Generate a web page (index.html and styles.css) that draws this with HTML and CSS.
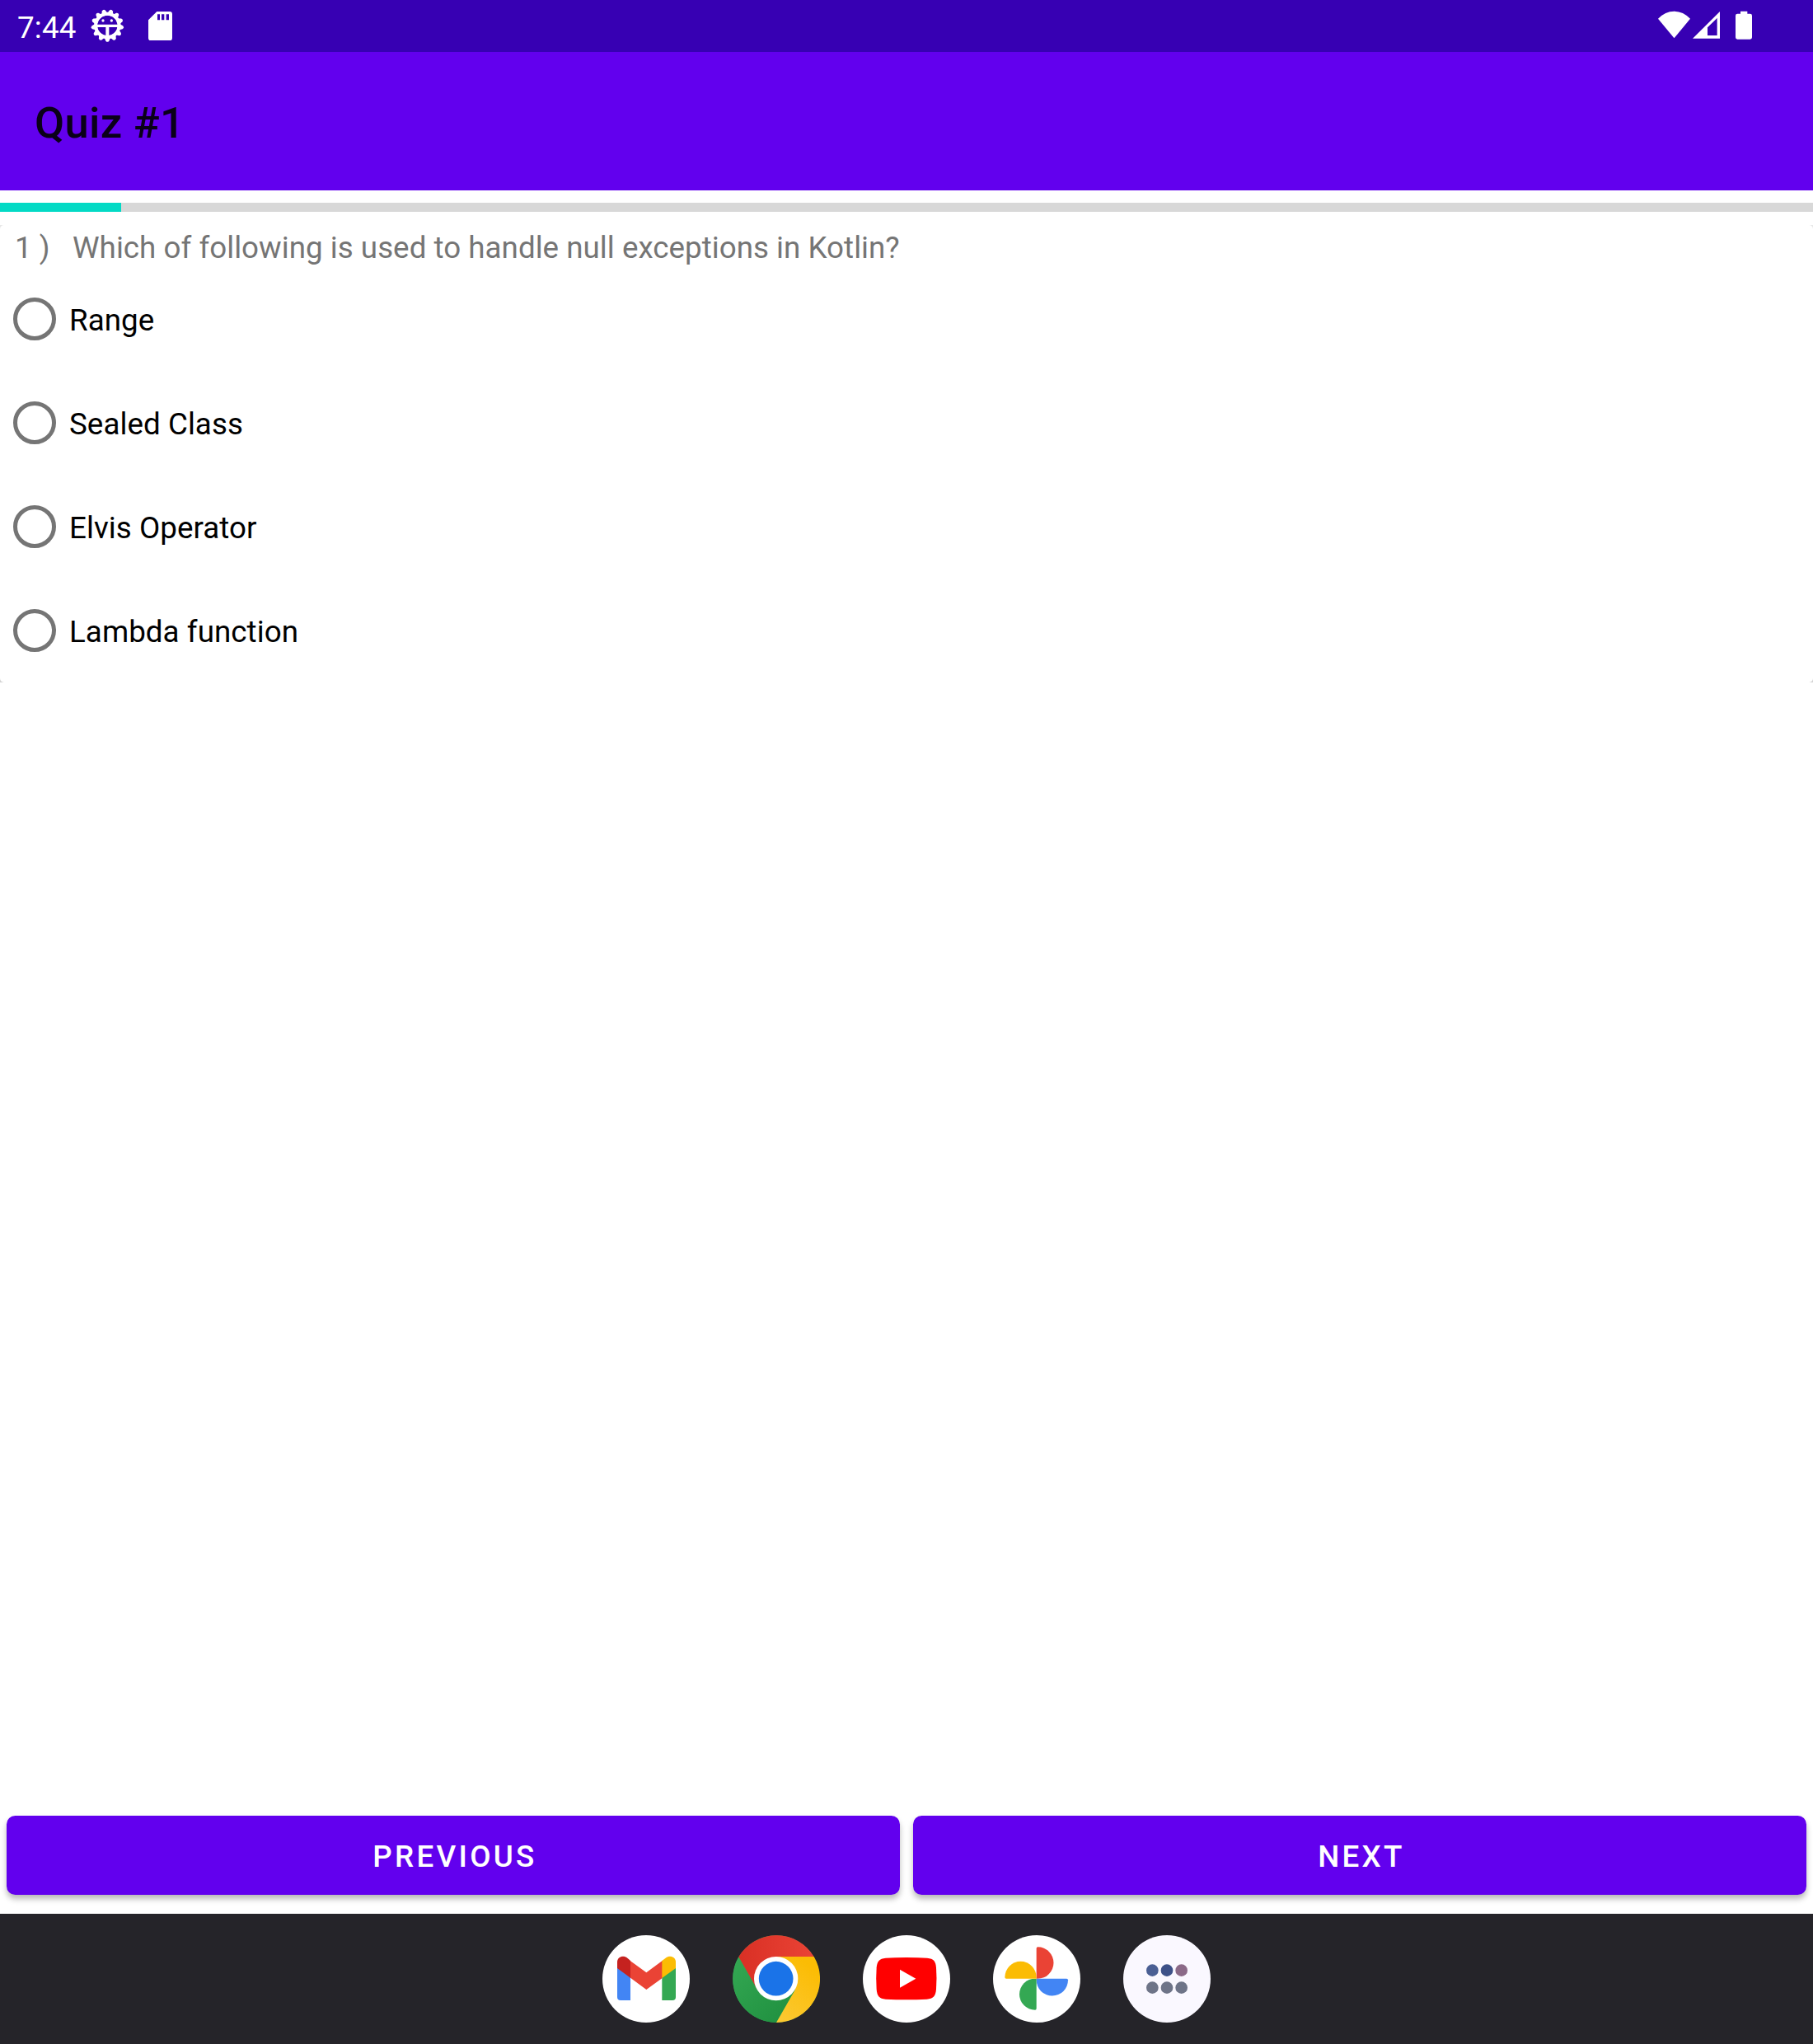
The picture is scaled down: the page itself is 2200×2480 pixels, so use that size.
FILE: index.html
```html
<!DOCTYPE html>
<html lang="en">
<head>
<meta charset="utf-8">
<title>Quiz #1</title>
<link rel="stylesheet" href="styles.css">
</head>
<body>
<div class="screen">
  <header class="status-bar">
    <span class="clock">7:44</span>
    <svg class="status-gear" viewBox="330 33 123 123" width="41" height="41" fill="#fff">
      <defs><path id="tooth" d="M377 56L385 37Q391 30 397 37L405 56Z"/></defs>
      <g>
        <use href="#tooth" transform="rotate(13.85 391 93)"/>
        <use href="#tooth" transform="rotate(41.54 391 93)"/>
        <use href="#tooth" transform="rotate(69.23 391 93)"/>
        <use href="#tooth" transform="rotate(96.92 391 93)"/>
        <use href="#tooth" transform="rotate(124.62 391 93)"/>
        <use href="#tooth" transform="rotate(152.31 391 93)"/>
        <use href="#tooth" transform="rotate(180 391 93)"/>
        <use href="#tooth" transform="rotate(207.69 391 93)"/>
        <use href="#tooth" transform="rotate(235.38 391 93)"/>
        <use href="#tooth" transform="rotate(263.08 391 93)"/>
        <use href="#tooth" transform="rotate(290.77 391 93)"/>
        <use href="#tooth" transform="rotate(318.46 391 93)"/>
        <use href="#tooth" transform="rotate(346.15 391 93)"/>
      </g>
      <circle cx="391" cy="93" r="42.5" fill="none" stroke="#fff" stroke-width="12"/>
      <path d="M352 89H430V99H397V132H385V99H352Z"/>
      <circle cx="375" cy="75" r="5"/><circle cx="406" cy="75" r="5"/>
    </svg>
    <svg class="status-card" viewBox="540 41 87 106" width="29" height="35.3">
      <path fill="#fff" fill-rule="evenodd" d="M571 41H618Q627 41 627 50V138Q627 147 618 147H549Q540 147 540 138V72ZM573 51V72H582V51ZM588 51V72H598V51ZM605 51V72H615V51Z"/>
    </svg>
    <svg class="status-system" viewBox="96 40 342 105" width="114" height="35" fill="#fff">
      <path d="M96 69Q122 42 154.500 42T213 69L154.500 140Z"/>
      <path fill-rule="evenodd" d="M321 43V141H222ZM311 67L276 101V130H311Z"/>
      <path d="M396 42H421V51H431Q438 51 438 58V137Q438 144 431 144H385Q378 144 378 137V58Q378 51 385 51H396Z"/>
    </svg>
  </header>

  <div class="app-bar"><h1 class="app-title">Quiz #1</h1></div>

  <main class="quiz">
    <div class="progress"><div class="progress-value"></div></div>
    <div class="card-edge">
      <section class="card">
        <div class="question"><span class="question-number">1 )</span><span>Which of following is used to handle null exceptions in Kotlin?</span></div>
        <div class="options">
          <div class="option"><span class="radio"></span><span class="option-label">Range</span></div>
          <div class="option"><span class="radio"></span><span class="option-label">Sealed Class</span></div>
          <div class="option"><span class="radio"></span><span class="option-label">Elvis Operator</span></div>
          <div class="option"><span class="radio"></span><span class="option-label">Lambda function</span></div>
        </div>
      </section>
    </div>
    <div class="actions">
      <button class="button">PREVIOUS</button>
      <button class="button">NEXT</button>
    </div>
  </main>

  <nav class="taskbar">
    <svg class="app" viewBox="33 54 318 318">
      <circle cx="192" cy="213" r="159" fill="#fff"/>
      <path fill="#4285f4" d="M87 170L135 205V291H99Q87 291 87 279Z"/>
      <path fill="#34a853" d="M300 170L250 207V291H288Q300 291 300 279Z"/>
      <path fill="#ea4335" d="M133 146L193 190L252 146V209L193 252L133 208Z"/>
      <path fill="#c5221f" d="M87 174V152C87 134 108 125 124 137L135 147V209Z"/>
      <path fill="#fbbc04" d="M300 174V152C300 134 279 125 263 137L250 147V210Z"/>
    </svg>
    <svg class="app" viewBox="507 54 318 318">
      <defs>
        <linearGradient id="red" x1="0" x2="1"><stop stop-color="#d93025"/><stop offset="1" stop-color="#ea4335"/></linearGradient>
        <linearGradient id="green" x1="1" y1="1" x2="0" y2="0"><stop stop-color="#1e8e3e"/><stop offset="1" stop-color="#34a853"/></linearGradient>
        <linearGradient id="yellow" x1="0" y1="1" x2=".5" y2="0"><stop stop-color="#fcc934"/><stop offset="1" stop-color="#fbbc04"/></linearGradient>
      </defs>
      <circle cx="666" cy="213" r="158" fill="#34a853"/>
      <path fill="url(#green)" d="M529 133A159 159 0 0 0 666 372L735 252L666 213L597 252Z"/>
      <path fill="url(#yellow)" d="M666 372A159 159 0 0 0 803 132H666V213L735 252Z"/>
      <path fill="url(#red)" d="M529 133A159 159 0 0 1 803 132H666V213L597 252Z"/>
      <circle cx="665" cy="212" r="80" fill="#fff"/>
      <circle cx="665" cy="212" r="62.500" fill="#1a73e8"/>
    </svg>
    <svg class="app" viewBox="21 54 318 318">
      <circle cx="180" cy="213" r="159" fill="#fff"/>
      <path fill="#f00" d="M179 135Q225 135 255 137C280 139 286 150 288 172Q291 212 288 251C286 275 277 285 254 287Q179 291 104 287C81 285 73 275 71 251Q68 212 71 172C73 149 81 139 104 137Q134 135 179 135Z"/>
      <path fill="#fff" d="M156 179L214 212L156 245Z"/>
    </svg>
    <svg class="app" viewBox="495 54 318 318">
      <circle cx="654" cy="213" r="159" fill="#fff"/>
      <path fill="#ea4335" d="M653 212V102Q653 97 658 97A57.500 57.500 0 0 1 658 212Z"/>
      <path fill="#4285f4" d="M653 212H763Q768 212 768 217A57.500 57.500 0 0 1 653 217Z"/>
      <path fill="#34a853" d="M653 212V321Q653 326 648 326A57 57 0 0 1 648 212Z"/>
      <path fill="#fbbc04" d="M653 212H543Q538 212 538 207A57.500 57.500 0 0 1 653 207Z"/>
    </svg>
    <svg class="app" viewBox="69 53 318 318">
      <circle cx="228" cy="212" r="159" fill="#faf8ff"/>
      <circle cx="175" cy="181" r="22" fill="#4a5f94"/>
      <circle cx="228" cy="181" r="22" fill="#3d5188"/>
      <circle cx="281" cy="181" r="22" fill="#8b6a88"/>
      <g fill="#6e7488"><circle cx="175" cy="244" r="22"/><circle cx="228" cy="244" r="22"/><circle cx="281" cy="244" r="22"/></g>
    </svg>
  </nav>
</div>
</body>
</html>
```
FILE: styles.css
```css
* { box-sizing: border-box; }

body {
  margin: 0;
  font-family: Roboto, sans-serif;
  font-size: 36.75px;
  line-height: 44px;
  color: #000;
}

.screen {
  display: flex;
  flex-direction: column;
  width: 2200px;
  height: 2480px;
  background: #fff;
}

.status-bar {
  display: flex;
  align-items: flex-start;
  height: 63px;
  padding-left: 21px;
  background: #3700b3;
  color: #fff;
}
.clock { width: 89px; margin-top: 12px; letter-spacing: .2px; }
.status-gear { margin-top: 11px; }
.status-card { margin: 13.7px 0 0 29px; }
.status-system { margin: 13.3px 74px 0 auto; }

.app-bar {
  display: flex;
  align-items: center;
  height: 168px;
  padding: 4px 42px 0;
  background: #6200ee;
}
.app-title {
  margin: 0;
  font-size: 52.5px;
  line-height: 62px;
  font-weight: 500;
  letter-spacing: .35px;
  color: #0a0018;
}

.quiz {
  display: flex;
  flex: 1;
  flex-direction: column;
  padding-top: 15px;
}
.progress { height: 11px; background: #d8d8d8; }
.progress-value { width: 147px; height: 100%; background: #03dac5; }

/* Grey only shows outside the card's rounded corners */
.card-edge { margin-top: 16px; background: linear-gradient(#e8e8e8, #d2d2d2); }
.card {
  height: 555px;
  padding-top: 6px;
  border-radius: 5px;
  background: #fff;
}
.question { display: flex; padding-left: 18px; letter-spacing: .02px; color: #757575; }
.question-number { width: 70px; }
.options { padding-top: 1px; }
.option { display: flex; align-items: center; height: 126px; padding-left: 15.75px; }
.radio { width: 52.5px; height: 52.5px; border: 5.25px solid #757575; border-radius: 50%; }
.option-label { padding: 3px 0 0 15.75px; letter-spacing: .05px; }

.actions { display: flex; gap: 16px; margin-top: auto; padding: 0 8px 23px; }
.button {
  flex: 1;
  height: 96px;
  padding: 3px 0 0 4px;
  border: 0;
  border-radius: 10.5px;
  background: #6200ee;
  box-shadow: 0 5px 7px rgba(0, 0, 0, .28);
  color: #fff;
  font: 500 36.75px/44px Roboto, sans-serif;
  letter-spacing: .0893em;
}

.taskbar {
  display: flex;
  justify-content: center;
  gap: 52px;
  height: 158px;
  padding-top: 26px;
  background: #252429;
}
.app { width: 106px; height: 106px; }
```
